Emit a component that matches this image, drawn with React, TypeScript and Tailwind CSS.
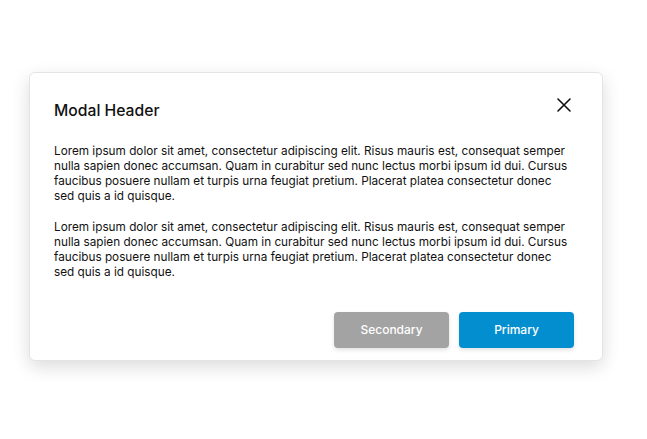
import React from "react";

const para =
  "Lorem ipsum dolor sit amet, consectetur adipiscing elit. Risus mauris est, consequat semper nulla sapien donec accumsan. Quam in curabitur sed nunc lectus morbi ipsum id dui. Cursus faucibus posuere nullam et turpis urna feugiat pretium. Placerat platea consectetur donec sed quis a id quisque.";

export default function App() {
  return (
    <div
      className="w-[647px] h-[439px] bg-white overflow-hidden pt-[72px] pl-[29px]"
      style={{ fontFamily: "Inter, 'Noto Sans', sans-serif" }}
    >
      <div className="w-[574px] h-[289px] bg-white border border-[#e4e4e4] rounded-[6px] shadow-[0_6px_18px_rgba(0,0,0,0.14)] flex flex-col pl-6 pr-7 pt-[26px] pb-3">
        <div className="flex items-center justify-between">
          <h2 className="text-[15.7px] leading-[24px] font-medium text-[#111]">Modal Header</h2>
          <button className="w-6 h-6 flex items-center justify-center -mt-[12px] -mr-[2px]">
            <svg width="14" height="14" viewBox="0 0 14 14" fill="none" stroke="#111" strokeWidth="1.6" strokeLinecap="round">
              <path d="M1 1L13 13M13 1L1 13" />
            </svg>
          </button>
        </div>
        <div className="mt-[21px] text-[11.75px] leading-[15px] text-[#111] flex flex-col gap-[16px]">
          <p>{para}</p>
          <p>{para}</p>
        </div>
        <div className="mt-auto flex justify-end gap-[10px]">
          <button className="w-[115px] h-9 rounded-[4px] bg-[#a3a3a3] text-white text-[12px] font-medium shadow-[0_2px_4px_rgba(0,0,0,0.12)]">
            Secondary
          </button>
          <button className="w-[115px] h-9 rounded-[4px] bg-[#038fcf] text-white text-[12px] font-medium shadow-[0_2px_4px_rgba(0,0,0,0.12)]">
            Primary
          </button>
        </div>
      </div>
    </div>
  );
}
